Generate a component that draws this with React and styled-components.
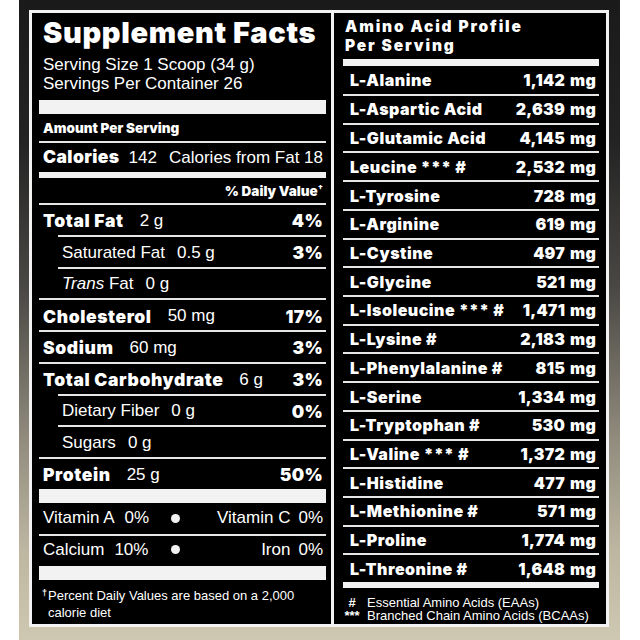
import React from "react";
import styled, { createGlobalStyle } from "styled-components";

const heavy = `"Inter", "Liberation Sans", Arial, sans-serif`;
const plain = `"Liberation Sans", Arial, sans-serif`;

const nutrients = [
    { label: "Total Fat", value: "2 g", dv: "4%" },
    { label: "Saturated Fat", value: "0.5 g", dv: "3%", sub: true },
    { label: <><i>Trans</i> Fat</>, value: "0 g", sub: true },
    { label: "Cholesterol", value: "50 mg", dv: "17%" },
    { label: "Sodium", value: "60 mg", dv: "3%" },
    { label: "Total Carbohydrate", value: "6 g", dv: "3%" },
    { label: "Dietary Fiber", value: "0 g", dv: "0%", sub: true },
    { label: "Sugars", value: "0 g", sub: true },
    { label: "Protein", value: "25 g", dv: "50%" },
];

const aminos = [
    ["L-Alanine", "1,142 mg"],
    ["L-Aspartic Acid", "2,639 mg"],
    ["L-Glutamic Acid", "4,145 mg"],
    ["Leucine *** #", "2,532 mg"],
    ["L-Tyrosine", "728 mg"],
    ["L-Arginine", "619 mg"],
    ["L-Cystine", "497 mg"],
    ["L-Glycine", "521 mg"],
    ["L-Isoleucine *** #", "1,471 mg"],
    ["L-Lysine #", "2,183 mg"],
    ["L-Phenylalanine #", "815 mg"],
    ["L-Serine", "1,334 mg"],
    ["L-Tryptophan #", "530 mg"],
    ["L-Valine *** #", "1,372 mg"],
    ["L-Histidine", "477 mg"],
    ["L-Methionine #", "571 mg"],
    ["L-Proline", "1,774 mg"],
    ["L-Threonine #", "1,648 mg"],
];

export default function App() {
    return (
        <>
            <GlobalStyle />
            <Page>
                <Frame>
                    <Label>
                        <LeftPanel>
                            <Title>Supplement Facts</Title>
                            <Serving>
                                Serving Size 1 Scoop (34 g)<br />
                                Servings Per Container 26
                            </Serving>
                            <Bar $h={14} />
                            <AmountRow>Amount Per Serving</AmountRow>
                            <CaloriesRow>
                                <span><CalLabel>Calories</CalLabel>142</span>
                                <span>Calories from Fat 18</span>
                            </CaloriesRow>
                            <Bar $h={6} />
                            <DvHead>% Daily Value<sup>†</sup></DvHead>
                            {nutrients.map((n, i) => (
                                <NutrientRow key={i} $sub={n.sub}>
                                    <NutrientName $sub={n.sub}>{n.label}</NutrientName>
                                    <Amount $sub={n.sub}>{n.value}</Amount>
                                    <Dv>{n.dv}</Dv>
                                </NutrientRow>
                            ))}
                            <Bar $h={14} />
                            <VitaminRow>
                                <span>Vitamin A<Pct>0%</Pct></span>
                                <Dot />
                                <Right>Vitamin C<Pct $small>0%</Pct></Right>
                            </VitaminRow>
                            <VitaminRow $lined>
                                <span>Calcium<Pct>10%</Pct></span>
                                <Dot />
                                <Right>Iron<Pct $small>0%</Pct></Right>
                            </VitaminRow>
                            <Bar $h={14} />
                            <Footnote>
                                <Dagger>†</Dagger>Percent Daily Values are based on a 2,000<br />
                                calorie diet
                            </Footnote>
                        </LeftPanel>

                        <RightPanel>
                            <AminoTitle>
                                <TitleLine>Amino Acid Profile</TitleLine>
                                <TitleLine>Per Serving</TitleLine>
                            </AminoTitle>
                            <Bar $h={7} />
                            <AminoList>
                                {aminos.map(([name, mg], i) => (
                                    <AminoRow key={name} $first={i === 0}>
                                        <AminoName>{name}</AminoName>
                                        <AminoMg>{mg}</AminoMg>
                                    </AminoRow>
                                ))}
                            </AminoList>
                            <Bar $h={6} />
                            <Legend>
                                <Mark>#</Mark><span>Essential Amino Acids (EAAs)</span>
                                <Mark>***</Mark><span>Branched Chain Amino Acids (BCAAs)</span>
                            </Legend>
                        </RightPanel>
                    </Label>
                </Frame>
            </Page>
        </>
    );
}

const GlobalStyle = createGlobalStyle`
    * {
        box-sizing: border-box;
    }
    html, body {
        margin: 0;
        padding: 0;
        background: #fff;
    }
    body {
        font-family: ${plain};
    }
`

const Page = styled.div`
    width: 640px;
    height: 640px;
    padding: 0 20px 0 19px;
    background: #fff;
`

const Frame = styled.div`
    height: 100%;
    padding: 10px 11px 13px 10px;
    background: linear-gradient(180deg, #1a1a1a 0%, #232323 22%, #4a4845 45%, #8f8a7c 68%, #bdb6a1 86%, #cec7b1 100%);
`

const Label = styled.div`
    height: 100%;
    border: 3px solid #f2f2f2;
    background: #000;
    color: #fff;
    display: grid;
    grid-template-columns: 299px 1fr;
`

const LeftPanel = styled.section`
    display: flex;
    flex-direction: column;
    padding: 0 5px 0 7px;
`

const RightPanel = styled.section`
    display: flex;
    flex-direction: column;
    border-left: 3px solid #f2f2f2;
    padding: 0 7px 0 9px;
`

const Title = styled.h1`
    margin: 3.5px 0 0;
    padding-left: 4px;
    font: 900 29px/32px ${heavy};
    letter-spacing: 0.65px;
    white-space: nowrap;
`

const Serving = styled.div`
    margin: 6.75px 0 6.75px;
    padding-left: 4px;
    font: 400 17px/19px ${plain};
`

const Bar = styled.div`
    flex: none;
    height: ${p => p.$h}px;
    background: #f2f2f2;
`

const AmountRow = styled.div`
    height: 29px;
    padding: 6px 0 0 4px;
    border-bottom: 2px solid #e6e6e6;
    font: 900 13.5px/16px ${heavy};
`

const CaloriesRow = styled.div`
    height: 29px;
    display: flex;
    justify-content: space-between;
    padding: 0 3px 0 4px;
    font: 400 17px/29px ${plain};
`

const CalLabel = styled.b`
    margin-right: 9px;
    font: 900 17.5px ${heavy};
    letter-spacing: 0.4px;
`

const DvHead = styled.div`
    height: 25px;
    padding: 2px 3px 0 0;
    text-align: right;
    font: 900 13.5px/23px ${heavy};

    sup {
        font-size: 8px;
        vertical-align: 5px;
        line-height: 0;
    }
`

const NutrientRow = styled.div`
    height: 31.75px;
    display: flex;
    align-items: center;
    padding: 2px 3px 0 4px;
    margin-left: ${p => (p.$sub ? 19 : 0)}px;
    border-top: 2px solid #e6e6e6;
`

const NutrientName = styled.span`
    font: ${p => (p.$sub ? `400 17px ${plain}` : `900 17.5px ${heavy}`)};
    letter-spacing: ${p => (p.$sub ? 0 : 0.6)}px;
`

const Amount = styled.span`
    margin-left: ${p => (p.$sub ? 12 : 16)}px;
    font: 400 17px ${plain};
`

const Dv = styled.span`
    margin-left: auto;
    font: 900 17.5px ${heavy};
    letter-spacing: 0.3px;
`

const VitaminRow = styled.div`
    height: ${p => (p.$lined ? 32 : 31)}px;
    display: grid;
    grid-template-columns: 124px 16px 1fr;
    align-items: center;
    padding: 0 3px ${p => (p.$lined ? 2 : 0)}px 4px;
    border-top: ${p => (p.$lined ? "2px solid #e6e6e6" : "none")};
    font: 400 17px ${plain};
`

const Pct = styled.span`
    margin-left: ${p => (p.$small ? 8 : 10)}px;
`

const Right = styled.span`
    text-align: right;
`

const Dot = styled.span`
    justify-self: center;
    width: 9px;
    height: 9px;
    border-radius: 50%;
    background: #f2f2f2;
`

const Footnote = styled.div`
    padding: 8px 0 0 9px;
    font: 400 13px/15px ${plain};
`

const Dagger = styled.span`
    display: inline-block;
    width: 0;
    position: relative;
    left: -6px;
    top: -4px;
    font-size: 9px;
    font-weight: 700;
`

const AminoTitle = styled.h2`
    margin: 4.2px 0 4.3px;
    padding-left: 2px;
    font: 900 15.5px/19px ${heavy};
    letter-spacing: 1.85px;
`

const TitleLine = styled.span`
    display: block;
    white-space: nowrap;
`

const AminoList = styled.div`
    display: flex;
    flex-direction: column;
`

const AminoRow = styled.div`
    height: ${p => (p.$first ? 27.5 : 28.72)}px;
    display: flex;
    justify-content: space-between;
    align-items: center;
    padding: 0 3px 0 7px;
    border-top: ${p => (p.$first ? "none" : "2px solid #e6e6e6")};
    font: 900 16px ${heavy};
    white-space: nowrap;
`

const AminoName = styled.span`
    letter-spacing: 0.5px;
`

const AminoMg = styled.span`
    letter-spacing: 0.25px;
    word-spacing: 1.5px;
`

const Legend = styled.div`
    margin-top: 7.7px;
    display: grid;
    grid-template-columns: 18px 1fr;
    column-gap: 6px;
    font: 400 13px/13.5px ${plain};
`

const Mark = styled.span`
    text-align: center;
    font-weight: 700;
`
